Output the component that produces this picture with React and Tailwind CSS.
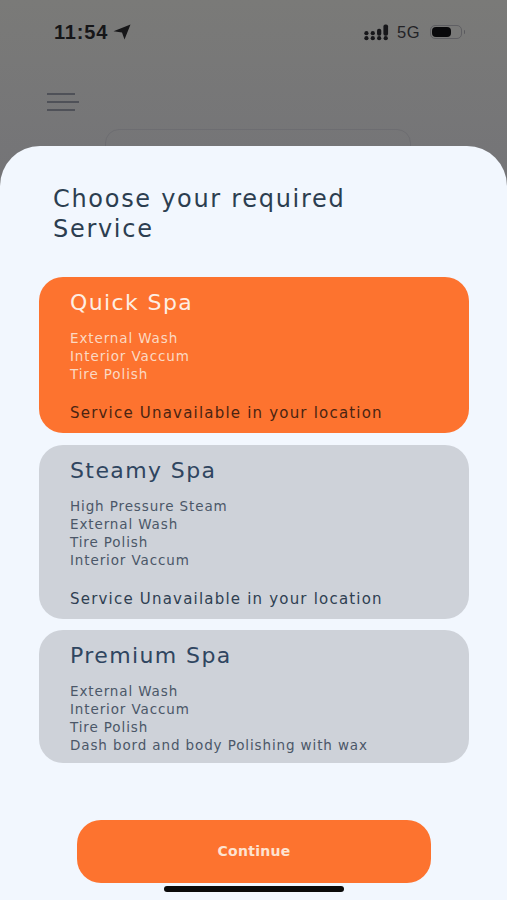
import React from "react";

function Card({ title, items, note, active, className }) {
  const titleC = active ? "text-[#fdeee3]" : "text-[#2f4560]";
  const itemC = active ? "text-[#fbd9c3]" : "text-[#4b5768]";
  const noteC = active ? "text-[#4a2412]" : "text-[#2f3f52]";
  return (
    <div className={`rounded-[24px] pl-[31px] pr-4 flex flex-col ${active ? "bg-[#fd732f]" : "bg-[#ced2d9]"} ${className}`}>
      <div className={`text-[22px] leading-[26px] tracking-[1.4px] ${titleC}`}>{title}</div>
      <div className={`mt-[13px] flex flex-col text-[13.5px] leading-[18px] tracking-[0.88px] ${itemC}`}>
        {items.map((t) => (
          <div key={t}>{t}</div>
        ))}
      </div>
      {note && (
        <div className={`mt-[21px] text-[15px] leading-[18px] tracking-[1.2px] ${noteC}`}>{note}</div>
      )}
    </div>
  );
}

export default function App() {
  return (
    <div className="w-[507px] h-[900px] overflow-hidden flex flex-col bg-gradient-to-b from-[#7a7a78] via-[#747477] via-20% to-[#717175] font-['DejaVu_Sans',Arial,sans-serif]">
      <div className="h-[146px] shrink-0 flex flex-col">
        <div className="flex items-center justify-between pl-[54px] pr-[42px] pt-[20px] h-[44px]">
          <div className="flex items-center gap-[5px]">
            <span className="text-[20px] leading-[22px] font-bold tracking-[0.8px] text-[#161618] font-['Liberation_Sans',Arial,sans-serif]">11:54</span>
            <svg width="18" height="16" viewBox="0 0 18 16">
              <path d="M0.5 7.2 L17.5 0.5 L11.5 15.5 L9 8.6 Z" fill="#161618" />
            </svg>
          </div>
          <div className="flex items-center">
            <svg width="25" height="17" viewBox="0 0 23 16" fill="#17171a">
              <circle cx="2" cy="8.6" r="2" /><circle cx="2" cy="13.4" r="2" />
              <circle cx="8" cy="8.6" r="2" /><circle cx="8" cy="13.4" r="2" />
              <rect x="12" y="4.5" width="4" height="6.5" rx="1.8" /><circle cx="14" cy="13.4" r="2" />
              <rect x="18" y="0.5" width="4.4" height="10.5" rx="1.8" /><circle cx="20.2" cy="13.4" r="2" />
            </svg>
            <span className="ml-[8px] text-[16.5px] leading-[18px] tracking-[0.8px] text-[#232326] font-['Liberation_Sans',Arial,sans-serif]">5G</span>
            <div className="ml-[9px] flex items-center">
              <div className="w-[32px] h-[14px] rounded-[5px] border border-[#5f5f63] p-[1px]">
                <div className="w-[19px] h-[10px] rounded-[4px] bg-[#09090b]" />
              </div>
              <div className="ml-[2px] w-[1.5px] h-[4px] rounded-r bg-[#5a5a5e]" />
            </div>
          </div>
        </div>
        <div className="relative pl-[47px] pt-[49px]">
          <div className="flex flex-col gap-[6px]">
            <div className="w-[28px] h-[2px] bg-[#4f5158]" />
            <div className="w-[32px] h-[2px] bg-[#4f5158]" />
            <div className="w-[28px] h-[2px] bg-[#4f5158]" />
          </div>
          <div className="absolute left-[105px] top-[85px] w-[306px] h-[40px] rounded-t-[14px] border border-[#6d6d71]" />
        </div>
      </div>
      <div className="relative z-10 flex-1 rounded-t-[40px] bg-[#f2f7fe] flex flex-col">
        <div className="pl-[53px] pt-[38px] text-[24px] leading-[30px] tracking-[1.7px] text-[#2c3e50]">
          <div>Choose your required</div>
          <div>Service</div>
        </div>
        <div className="ml-[39px] mr-[38px] mt-[33px] flex flex-col">
          <Card
            active
            className="h-[156px] pt-[13px]"
            title="Quick Spa"
            items={["External Wash", "Interior Vaccum", "Tire Polish"]}
            note="Service Unavailable in your location"
          />
          <Card
            className="mt-[12px] h-[174px] pt-[13px]"
            title="Steamy Spa"
            items={["High Pressure Steam", "External Wash", "Tire Polish", "Interior Vaccum"]}
            note="Service Unavailable in your location"
          />
          <Card
            className="mt-[11px] h-[133px] pt-[13px]"
            title="Premium Spa"
            items={["External Wash", "Interior Vaccum", "Tire Polish", "Dash bord and body Polishing with wax"]}
          />
        </div>
        <div className="ml-[77px] mr-[76px] mt-[57px] h-[63px] rounded-[24px] bg-[#fd732f] flex items-center justify-center text-[14px] font-bold tracking-[0.3px] text-[#fde3d1]">
          Continue
        </div>
        <div className="ml-[164px] mr-[163px] mt-[3px] h-[6px] rounded-full bg-[#0a0a0a]" />
      </div>
    </div>
  );
}
